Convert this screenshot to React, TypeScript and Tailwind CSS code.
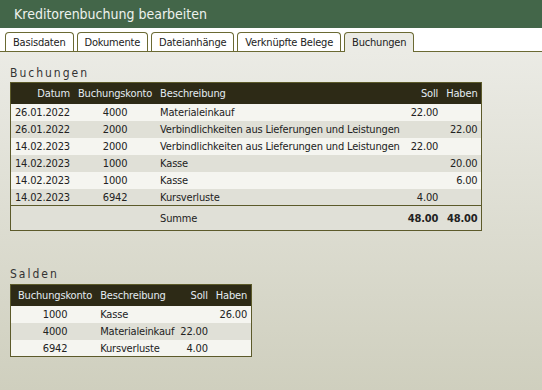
import React from "react";

const buchungen = [
  { d: "26.01.2022", k: "4000", b: "Materialeinkauf", s: "22.00", h: "" },
  { d: "26.01.2022", k: "2000", b: "Verbindlichkeiten aus Lieferungen und Leistungen", s: "", h: "22.00" },
  { d: "14.02.2023", k: "2000", b: "Verbindlichkeiten aus Lieferungen und Leistungen", s: "22.00", h: "" },
  { d: "14.02.2023", k: "1000", b: "Kasse", s: "", h: "20.00" },
  { d: "14.02.2023", k: "1000", b: "Kasse", s: "", h: "6.00" },
  { d: "14.02.2023", k: "6942", b: "Kursverluste", s: "4.00", h: "" },
];

const salden = [
  { k: "1000", b: "Kasse", s: "", h: "26.00" },
  { k: "4000", b: "Materialeinkauf", s: "22.00", h: "" },
  { k: "6942", b: "Kursverluste", s: "4.00", h: "" },
];

const tabs = ["Basisdaten", "Dokumente", "Dateianhänge", "Verknüpfte Belege", "Buchungen"];

export default function App() {
  return (
    <div
      className="w-[542px] h-[390px] overflow-hidden flex flex-col text-[11px] text-[#222] whitespace-nowrap"
      style={{ fontFamily: '"DejaVu Sans Condensed", "DejaVu Sans", Verdana, sans-serif', fontStretch: "semi-condensed" }}
    >
      <div className="h-[28px] bg-[#436649] flex items-center pl-[14px] text-[14px] text-[#eef2ee]">
        Kreditorenbuchung bearbeiten
      </div>
      <div className="h-[24px] bg-white flex items-end pl-[5px] gap-[3px] border-b border-[#6b6a33] tracking-[-0.2px]">
        {tabs.map((t, i) => (
          <div
            key={t}
            className={
              "px-[7px] flex items-center rounded-t-[4px] border border-b-0 border-[#6b6a33] leading-none " +
              (i === tabs.length - 1 ? "bg-[#ebebe5] h-[20px] mb-[-1px]" : "bg-white h-[19px]")
            }
          >
            {t}
          </div>
        ))}
      </div>
      <div className="flex-1 bg-gradient-to-b from-[#ebebe5] to-[#cfcfbe] px-[10px] pt-[15px]">
        <div className="text-[12px] tracking-[2px] text-[#333] leading-none mb-[3px]">Buchungen</div>
        <table className="border border-[#5c5a2a] border-collapse leading-none tracking-[-0.17px]">
          <thead>
            <tr className="bg-[#2d2a16] text-[#e4ecf2] h-[21px]">
              <th className="font-normal text-right pl-[4px] pr-[4px]">Datum</th>
              <th className="font-normal text-center px-[4px]">Buchungskonto</th>
              <th className="font-normal text-left px-[4px]">Beschreibung</th>
              <th className="font-normal text-right px-[4px]">Soll</th>
              <th className="font-normal text-right pl-[4px] pr-[4px]">Haben</th>
            </tr>
          </thead>
          <tbody>
            {buchungen.map((r, i) => (
              <tr key={i} className={"h-[17px] " + (i % 2 === 0 ? "bg-[#f5f5f0]" : "bg-[#e0e0d7]")}>
                <td className="pl-[4px] pr-[4px] pt-[1px]">{r.d}</td>
                <td className="text-center px-[4px] pt-[1px]">{r.k}</td>
                <td className="px-[4px] pt-[1px]">{r.b}</td>
                <td className="text-right px-[4px] pt-[1px]">{r.s}</td>
                <td className="text-right px-[4px] pt-[1px]">{r.h}</td>
              </tr>
            ))}
            <tr className="h-[25px] bg-[#e0e0d7] border-t border-[#5c5a2a]">
              <td></td>
              <td></td>
              <td className="px-[4px]">Summe</td>
              <td className="text-right px-[4px] font-bold">48.00</td>
              <td className="text-right px-[4px] font-bold">48.00</td>
            </tr>
          </tbody>
        </table>
        <div className="text-[12px] tracking-[2px] text-[#333] leading-none mt-[37px] mb-[4px]">Salden</div>
        <table className="border border-[#5c5a2a] border-collapse leading-none tracking-[-0.17px]">
          <thead>
            <tr className="bg-[#2d2a16] text-[#e4ecf2] h-[21px]">
              <th className="font-normal text-center pl-[7px] pr-[4px]">Buchungskonto</th>
              <th className="font-normal text-left pl-[4px] pr-[3px]">Beschreibung</th>
              <th className="font-normal text-right pl-[3px] pr-[4px]">Soll</th>
              <th className="font-normal text-right px-[4px]">Haben</th>
            </tr>
          </thead>
          <tbody>
            {salden.map((r, i) => (
              <tr key={i} className={"h-[17px] " + (i % 2 === 0 ? "bg-[#f5f5f0]" : "bg-[#e0e0d7]")}>
                <td className="text-center pl-[7px] pr-[4px] pt-[1px]">{r.k}</td>
                <td className="pl-[4px] pr-[3px] pt-[1px]">{r.b}</td>
                <td className="text-right pl-[3px] pr-[4px] pt-[1px]">{r.s}</td>
                <td className="text-right px-[4px] pt-[1px]">{r.h}</td>
              </tr>
            ))}
          </tbody>
        </table>
      </div>
    </div>
  );
}
